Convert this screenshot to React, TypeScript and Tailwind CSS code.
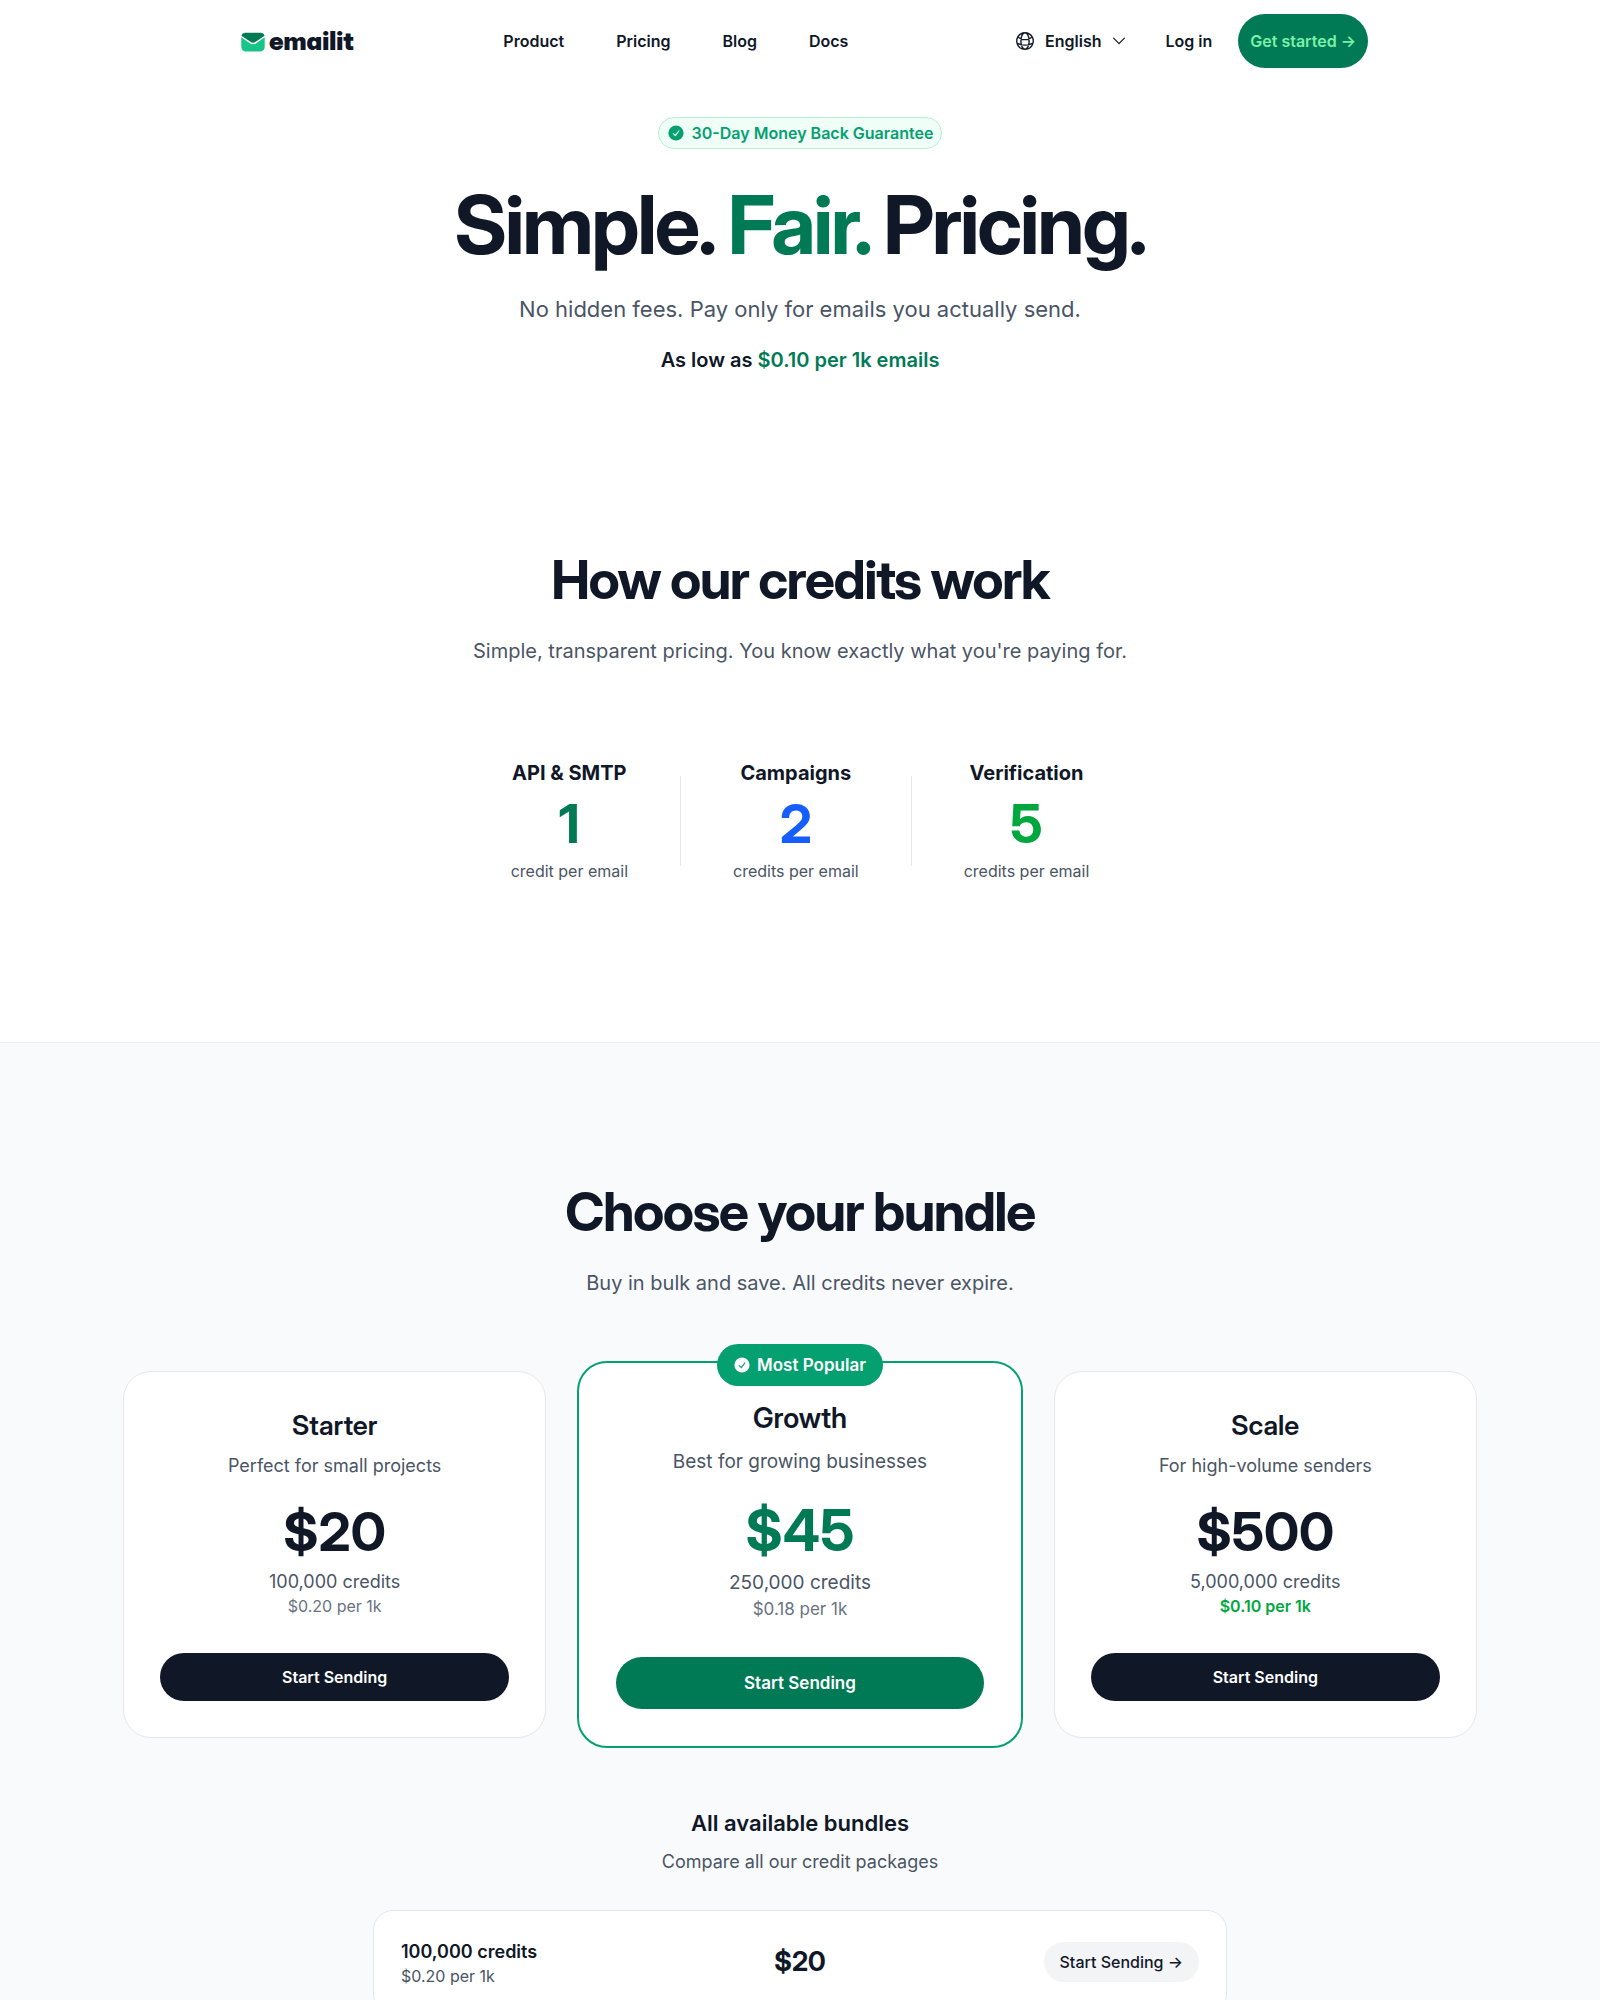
import React from "react";
import { HiOutlineGlobeAlt } from "react-icons/hi2";

const navLinks = ["Product", "Pricing", "Blog", "Docs"];

const creditCosts = [
  { label: "API & SMTP", value: "1", unit: "credit per email", color: "text-emerald-700" },
  { label: "Campaigns", value: "2", unit: "credits per email", color: "text-blue-600" },
  { label: "Verification", value: "5", unit: "credits per email", color: "text-green-600" },
];

const bundles = [{ credits: "100,000 credits", rate: "$0.20 per 1k", price: "$20" }];

function EnvelopeIcon() {
  return (
    <svg className="mt-[2px] h-5 w-6" viewBox="0 0 24 20" aria-hidden="true">
      <path d="M4.400 .8h15.200a4.200 4.200 0 0 1 4 2.900L14.600 9.800a4.600 4.600 0 0 1-5.200 0L.4 3.700A4.200 4.200 0 0 1 4.400 .8z" fill="#007a55" />
      <path d="M.3 5.300l8.500 5.900a5.600 5.600 0 0 0 6.400 0l8.500-5.900V15a4.600 4.600 0 0 1-4.600 4.600H4.900A4.600 4.600 0 0 1 .3 15z" fill="#17c586" />
    </svg>
  );
}

function ChevronIcon() {
  return (
    <svg className="h-2 w-3" viewBox="0 0 12 8" fill="none" stroke="currentColor" strokeWidth="1.200" strokeLinecap="round" strokeLinejoin="round" aria-hidden="true">
      <path d="M.6 1.200L6 6.600l5.400-5.400" />
    </svg>
  );
}

function CheckBadge({ className, mark }: { className: string; mark: string }) {
  return (
    <svg className={className} viewBox="0 0 16 16" aria-hidden="true">
      <circle cx="8" cy="8" r="7.600" fill="currentColor" />
      <path d="M5.300 8.600l2 2 3.600-4.800" fill="none" stroke={mark} strokeWidth="1.100" strokeLinecap="round" strokeLinejoin="round" />
    </svg>
  );
}

function Header() {
  return (
    <header className="mx-auto flex max-w-6xl items-center justify-between pt-[14px] pr-2 pl-[17px]">
      <a href="#" className="flex items-center gap-1" aria-label="emailit">
        <EnvelopeIcon />
        <span className="font-['Inter_Display','Inter',sans-serif] text-[25px] leading-8 font-black text-gray-900 [font-feature-settings:'cv11']">emailit</span>
      </a>
      <nav className="mr-4 flex items-center gap-[52px]">
        {navLinks.map((l) => (
          <a key={l} href="#" className="text-base font-semibold">
            {l}
          </a>
        ))}
      </nav>
      <div className="flex items-center text-base font-semibold">
        <button type="button" className="flex items-center">
          <HiOutlineGlobeAlt className="size-[22px]" aria-hidden="true" />
          <span className="mr-3 ml-[9px]">English</span>
          <ChevronIcon />
        </button>
        <a href="#" className="ml-10">
          Log in
        </a>
        <a href="#" className="ml-[26px] rounded-full bg-emerald-700 px-3 py-[15px] text-green-300">
          Get started →
        </a>
      </div>
    </header>
  );
}

function SideCard(p: { name: string; blurb: string; price: string; credits: string; rate: string; best?: boolean }) {
  return (
    <article className="rounded-[28px] border border-gray-200 bg-white p-9 text-center">
      <h3 className="font-['Inter_Display','Inter',sans-serif] text-[27px] leading-9 font-semibold">{p.name}</h3>
      <p className="mt-2 text-lg text-gray-600">{p.blurb}</p>
      <p className="mt-[25px] font-['Inter_Display','Inter',sans-serif] text-[54px] leading-[54px] font-bold">{p.price}</p>
      <p className="mt-[9px] text-lg text-gray-600">{p.credits}</p>
      <p className={p.best ? "text-base leading-5 font-semibold text-green-600" : "text-base leading-5 text-gray-500"}>{p.rate}</p>
      <button type="button" className="mt-[37px] w-full rounded-full bg-gray-900 py-3 text-base font-semibold text-white">
        Start Sending
      </button>
    </article>
  );
}

function FeaturedCard() {
  return (
    <article className="relative -mx-[11px] rounded-[30px] border-2 border-[#05a070] bg-white px-[37px] pt-[37px] pb-[37px] text-center">
      <div className="absolute inset-x-0 top-[-19px] flex justify-center">
        <span className="flex items-center gap-[7px] rounded-full bg-[#05a070] px-[17px] py-[9px] text-[17px] leading-6 font-semibold text-white">
          <CheckBadge className="size-4" mark="#05a070" />
          Most Popular
        </span>
      </div>
      <h3 className="font-['Inter_Display','Inter',sans-serif] text-[28px] leading-9 font-semibold">Growth</h3>
      <p className="mt-3 text-[19px] leading-7 text-gray-600">Best for growing businesses</p>
      <p className="mt-[26px] font-['Inter_Display','Inter',sans-serif] text-[57px] leading-[57px] font-bold text-emerald-700">$45</p>
      <p className="mt-[10px] text-[19px] leading-7 text-gray-600">250,000 credits</p>
      <p className="text-[17px] leading-6 text-gray-500">$0.18 per 1k</p>
      <button type="button" className="mt-9 w-full rounded-full bg-emerald-700 py-[14px] text-[17px] leading-6 font-semibold text-white">
        Start Sending
      </button>
    </article>
  );
}

export default function App() {
  return (
    <div className="min-h-screen bg-white font-['Inter',sans-serif] text-gray-900">
      <Header />

      <main>
        <section className="mt-[49px] flex flex-col items-center text-center">
          <p className="flex items-center rounded-full border border-[#bbefd6] bg-[#effef6] py-[3px] pr-2 pl-[9px] text-base font-semibold text-[#05a070]">
            <CheckBadge className="mr-2 size-4" mark="#effef6" />
            30-Day Money Back Guarantee
          </p>
          <h1 className="mt-9 font-['Inter_Display','Inter',sans-serif] text-[81px] leading-[81px] font-bold tracking-[-0.03em]">
            Simple. <span className="text-emerald-700">Fair.</span> Pricing.
          </h1>
          <p className="mt-[27px] text-[22px] leading-8 text-gray-600">No hidden fees. Pay only for emails you actually send.</p>
          <p className="mt-[21px] text-xl font-semibold">
            As low as <span className="text-emerald-700">$0.10 per 1k emails</span>
          </p>
        </section>

        <section className="mt-[179px] pb-[159px] text-center">
          <h2 className="font-['Inter_Display','Inter',sans-serif] text-[54px] leading-[54px] font-bold tracking-[-0.03em]">How our credits work</h2>
          <p className="mt-[30px] text-xl text-gray-600">Simple, transparent pricing. You know exactly what you're paying for.</p>
          <div className="mt-[94px] flex items-center justify-center gap-[52px]">
            {creditCosts.map((c, i) => (
              <React.Fragment key={c.label}>
                {i > 0 && <div className="h-[90px] w-px bg-gray-200" />}
                <div>
                  <h3 className="text-xl font-bold">{c.label}</h3>
                  <p className={"mt-[10px] font-['Inter_Display','Inter',sans-serif] text-[54px] leading-[54px] font-bold " + c.color}>{c.value}</p>
                  <p className="mt-2 text-base text-gray-600">{c.unit}</p>
                </div>
              </React.Fragment>
            ))}
          </div>
        </section>

        <section className="border-t border-[#eef0f3] bg-gray-50 px-[123px] pt-[142px] pb-36">
          <div className="text-center">
            <h2 className="font-['Inter_Display','Inter',sans-serif] text-[54px] leading-[54px] font-bold tracking-[-0.03em]">Choose your bundle</h2>
            <p className="mt-[30px] text-xl text-gray-600">Buy in bulk and save. All credits never expire.</p>
          </div>

          <div className="mx-auto mt-[64px] grid max-w-[1354px] grid-cols-3 items-center gap-[42px]">
            <SideCard name="Starter" blurb="Perfect for small projects" price="$20" credits="100,000 credits" rate="$0.20 per 1k" />
            <FeaturedCard />
            <SideCard name="Scale" blurb="For high-volume senders" price="$500" credits="5,000,000 credits" rate="$0.10 per 1k" best />
          </div>

          <div className="mt-[59px] text-center">
            <h3 className="text-[22px] leading-8 font-semibold">All available bundles</h3>
            <p className="mt-[9px] text-lg text-gray-600">Compare all our credit packages</p>
          </div>
          <ul className="mx-auto mt-[34px] max-w-[854px] rounded-[20px] border border-gray-200 bg-white">
            {bundles.map((b) => (
              <li key={b.credits} className="grid grid-cols-3 items-center px-[27px] py-[27px]">
                <div>
                  <p className="text-lg leading-7 font-semibold">{b.credits}</p>
                  <p className="text-base leading-5 text-gray-600">{b.rate}</p>
                </div>
                <p className="text-center font-['Inter_Display','Inter',sans-serif] text-[27px] leading-9 font-bold">{b.price}</p>
                <div className="text-right">
                  <a href="#" className="inline-block rounded-full bg-gray-100 px-4 py-2 text-base font-medium">
                    Start Sending →
                  </a>
                </div>
              </li>
            ))}
          </ul>
        </section>
      </main>
    </div>
  );
}
